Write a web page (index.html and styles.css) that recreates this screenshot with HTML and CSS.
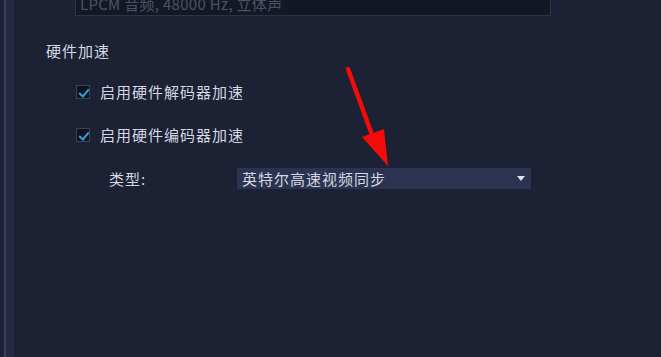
FILE: index.html
```html
<!DOCTYPE html>
<html lang="zh-CN">
<head>
    <meta charset="UTF-8">
    <title>硬件加速</title>
    <link rel="stylesheet" href="styles.css">
</head>
<body>
    <div class="side-strip">
        <div class="strip-dark"></div>
        <div class="strip-line"></div>
        <div class="strip-panel"></div>
    </div>

    <div class="settings">
        <div class="audio-field">LPCM 音频, 48000 Hz, 立体声</div>

        <div class="section-title">硬件加速</div>

        <label class="check-row first">
            <span class="check-box"></span>
            <span>启用硬件解码器加速</span>
        </label>

        <label class="check-row">
            <span class="check-box"></span>
            <span>启用硬件编码器加速</span>
        </label>

        <div class="type-row">
            <span class="type-label">类型:</span>
            <div class="select-box">
                <span>英特尔高速视频同步</span>
                <span class="select-arrow"></span>
            </div>
        </div>
    </div>

    <!-- 注释用的红色箭头 -->
    <svg class="annotation" width="661" height="357" viewBox="0 0 661 357">
        <line x1="348" y1="69" x2="371" y2="132" stroke="#f50a0a" stroke-width="4.5" stroke-linecap="round"/>
        <polygon points="362,137 384,129 388,166" fill="#f50a0a"/>
    </svg>
</body>
</html>
```

FILE: styles.css
```css
* {
    margin: 0;
    padding: 0;
    box-sizing: border-box;
}

body {
    font-family: "Noto Sans CJK SC", "Noto Sans", sans-serif;
    display: flex;
    height: 100vh;
    overflow: hidden;
    background-color: #1c2133;
    color: #d4d8e2;
}

.side-strip {
    display: flex;
    width: 14px;
    flex-shrink: 0;
}

.strip-dark {
    width: 4px;
    background-color: #1e2236;
}

.strip-line {
    width: 2px;
    background-color: #3a3e60;
}

.strip-panel {
    width: 8px;
    background-color: #252a41;
}

.settings {
    flex: 1;
    display: flex;
    flex-direction: column;
    padding-left: 32px;
}

.audio-field {
    width: 476px;
    height: 26px;
    margin-top: -10px;
    margin-left: 29px;
    padding: 3px 4px 0;
    overflow: hidden;
    background-color: #141824;
    border: 1px solid #2d3346;
    border-top: none;
    color: #4b5267;
    font-size: 15px;
    line-height: 22px;
    letter-spacing: 0.3px;
}

.section-title {
    margin-top: 25px;
    font-size: 15px;
    line-height: 20px;
    letter-spacing: 1px;
}

.check-row {
    display: flex;
    align-items: center;
    gap: 10px;
    margin-left: 30px;
    margin-top: 23px;
    font-size: 15px;
    line-height: 20px;
    letter-spacing: 1px;
}

.check-row.first {
    margin-top: 21px;
}

.check-box {
    position: relative;
    width: 14px;
    height: 14px;
    background-color: #10141f;
    border: 1px solid #39415a;
}

.check-box::after {
    content: "";
    position: absolute;
    left: 4px;
    top: 1px;
    width: 4px;
    height: 8px;
    border-right: 2px solid #2f9fe8;
    border-bottom: 2px solid #2f9fe8;
    transform: rotate(40deg);
}

.type-row {
    display: flex;
    align-items: center;
    margin-top: 23px;
    margin-left: 63px;
}

.type-label {
    width: 128px;
    font-size: 15px;
    letter-spacing: 1px;
}

.select-box {
    display: flex;
    align-items: center;
    justify-content: space-between;
    width: 294px;
    height: 21px;
    padding: 0 6px 0 5px;
    background-color: #2b3350;
    font-size: 15px;
    letter-spacing: 1px;
}

.select-arrow {
    width: 0;
    height: 0;
    border-left: 4px solid transparent;
    border-right: 4px solid transparent;
    border-top: 5px solid #dfe3ee;
}

.annotation {
    position: absolute;
    top: 0;
    left: 0;
    pointer-events: none;
}
```
